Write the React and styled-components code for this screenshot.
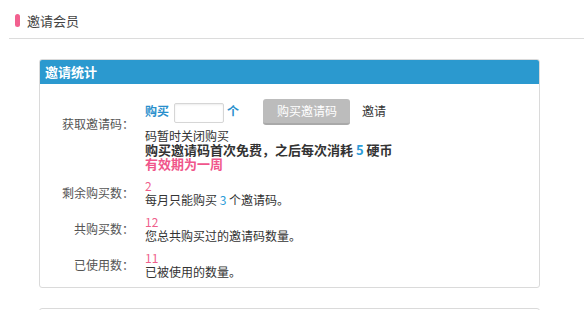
import React from "react";
import styled, { createGlobalStyle } from "styled-components";

const GlobalStyle = createGlobalStyle`
  html, body { margin: 0; padding: 0; background: #fff; }
  body {
    font-family: "Noto Sans CJK SC", "Liberation Sans", sans-serif;
    font-size: 12px;
    color: #333;
  }
`;

const Page = styled.div`
  width: 584px;
  height: 310px;
  overflow: hidden;
`;

const TopBar = styled.div`
  margin-left: 9px;
  height: 35px;
  padding: 3px 0 0 6px;
  border-bottom: 1px solid #dcdcdc;
  display: flex;
  align-items: center;
`;

const Pill = styled.span`
  width: 5px;
  height: 13px;
  border-radius: 3px;
  background: #f2608f;
  margin-right: 7px;
`;

const TopTitle = styled.h1`
  margin: 0;
  font-size: 13px;
  font-weight: normal;
  color: #444;
  line-height: 1;
`;

const Content = styled.div`
  padding: 20px 44px 0 39px;
  display: flex;
  flex-direction: column;
  gap: 20px;
`;

const Card = styled.section`
  border: 1px solid #dadada;
  border-radius: 3px;
  overflow: hidden;
  min-height: ${(p) => (p.$placeholder ? "40px" : "0")};
`;

const CardHead = styled.h2`
  margin: 0;
  height: 24px;
  background: #2b99cf;
  color: #fff;
  font-size: 13px;
  font-weight: bold;
  line-height: 24px;
  padding-left: 5px;
`;

const CardBody = styled.div`
  padding: 12px 0 8px;
  display: grid;
  grid-template-columns: 94px 250px;
  column-gap: 11px;
  row-gap: 8px;
`;

const Label = styled.div`
  text-align: right;
  color: #555;
  line-height: 14px;
  align-self: ${(p) => (p.$top ? "start" : "center")};
  padding-top: ${(p) => (p.$top ? "21px" : "0")};
`;

const Value = styled.div`
  line-height: 14px;
`;

const BuyLine = styled.div`
  line-height: 14px;
`;

const BlueStrong = styled.span`
  color: #2a8fcc;
  font-weight: bold;
`;

const CountInput = styled.input`
  display: inline-block;
  vertical-align: middle;
  box-sizing: border-box;
  width: 50px;
  height: 20px;
  margin: 0 3px 0 5px;
  padding: 0 4px;
  border: 1px solid #d6d6d6;
  border-radius: 2px;
  box-shadow: inset 0 1px 2px rgba(0, 0, 0, 0.08);
  background: #fff;
  outline: none;
  font: inherit;
`;

const BuyButton = styled.button`
  display: inline-block;
  vertical-align: middle;
  box-sizing: border-box;
  height: 26px;
  padding: 0 13px 0 14px;
  margin: 3px 12px 4px 24px;
  border: 0;
  border-bottom: 2px solid #a9a9a9;
  border-radius: 3px;
  background: #bcbcbc;
  color: #fff;
  font-family: inherit;
  font-size: 12px;
  line-height: 24px;
  cursor: default;
`;

const Note = styled.div`
  font-size: 13px;
  font-weight: bold;
  color: ${(p) => (p.$pink ? "#f0568b" : "#333")};
`;

const Blue = styled.span`
  color: #2a9bd8;
`;

const Num = styled.div`
  color: #ef5f8c;
`;

const Desc = styled.div`
  color: #333;
`;

export default function App() {
  return (
    <Page>
      <GlobalStyle />
      <TopBar>
        <Pill />
        <TopTitle>邀请会员</TopTitle>
      </TopBar>
      <Content>
        <Card>
          <CardHead>邀请统计</CardHead>
          <CardBody>
            <Label $top>获取邀请码：</Label>
            <Value>
              <BuyLine>
                <BlueStrong>购买</BlueStrong>
                <CountInput type="text" />
                <BlueStrong>个</BlueStrong>
                <BuyButton type="button">购买邀请码</BuyButton>
                邀请码暂时关闭购买
              </BuyLine>
              <Note>
                购买邀请码首次免费，之后每次消耗 <Blue>5</Blue> 硬币
              </Note>
              <Note $pink>有效期为一周</Note>
            </Value>

            <Label>剩余购买数：</Label>
            <Value>
              <Num>2</Num>
              <Desc>
                每月只能购买 <Blue>3</Blue> 个邀请码。
              </Desc>
            </Value>

            <Label>共购买数：</Label>
            <Value>
              <Num>12</Num>
              <Desc>您总共购买过的邀请码数量。</Desc>
            </Value>

            <Label>已使用数：</Label>
            <Value>
              <Num>11</Num>
              <Desc>已被使用的数量。</Desc>
            </Value>
          </CardBody>
        </Card>
        <Card $placeholder />
      </Content>
    </Page>
  );
}
